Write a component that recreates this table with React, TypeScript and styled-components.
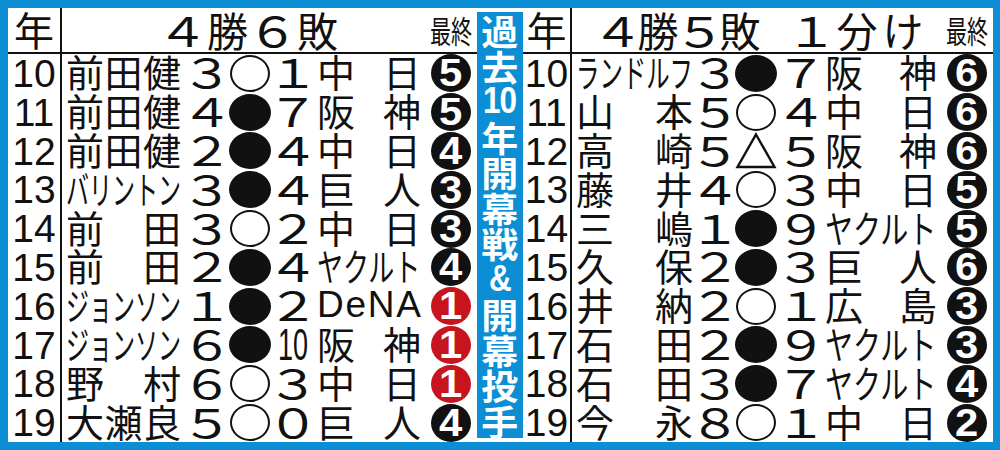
import React from 'react';
import styled, {createGlobalStyle} from 'styled-components';

const BLUE = `#0b8ed4`;
const RED = `#c8141f`;
const INK = `#111111`;
const JP = `"Noto Sans CJK JP", "Noto Sans", sans-serif`;
const LATIN = `"Liberation Sans", Arial, sans-serif`;

const GlobalStyle = createGlobalStyle`
  html, body {
    margin: 0;
    padding: 0;
    background: #ffffff;
  }

  body {
    font-family: ${JP};
    color: ${INK};
  }
`;

const Frame = styled.div`
  box-sizing: border-box;
  display: flex;
  width: 1000px;
  height: 450px;

  background: #ffffff;
  border: 8px solid ${BLUE};
  border-right-width: 7px;

  overflow: hidden;
`;

const Table = styled.div<{$cols: string}>`
  flex: none;
  display: grid;
  grid-template-columns: ${({$cols}) => $cols};
  grid-template-rows: 46px repeat(10, minmax(0, 1fr));
  height: 100%;
`;

const Cell = styled.div<{$pad?: string}>`
  box-sizing: border-box;
  display: flex;
  align-items: center;
  justify-content: center;
  min-width: 0;
  min-height: 0;
  padding: ${({$pad}) => $pad || `0`};
  line-height: 1;
`;

const HeadCell = styled(Cell)`
  border-bottom: 2px solid ${INK};
`;

const HeadYear = styled(HeadCell)`
  border-right: 2px solid ${INK};
  padding-bottom: 3px;
  font-size: 40px;
`;

const Title = styled(HeadCell)<{$gap?: number}>`
  grid-column: 2 / 7;
  gap: ${({$gap}) => $gap || 0}px;
  font-size: 41px;
`;

const TitlePart = styled.span<{$spacing: number}>`
  display: flex;
  align-items: center;
  gap: ${({$spacing}) => $spacing}px;
  white-space: nowrap;
`;

const HeadFinal = styled(HeadCell)`
  padding-bottom: 2px;
  font-size: 31px;
`;

const Narrow = styled.span<{$k: number}>`
  display: inline-block;
  white-space: nowrap;
  transform: scaleX(${({$k}) => $k});
`;

const YearCell = styled(Cell)`
  border-right: 2px solid ${INK};
  font-family: ${LATIN};
  font-size: 39px;
`;

const TextCell = styled(Cell)`
  justify-content: stretch;
  font-size: 38px;
`;

const SpreadBox = styled.div<{$latin?: boolean}>`
  display: flex;
  justify-content: space-between;
  align-items: center;
  width: 100%;

  font-family: ${({$latin}) => $latin ? LATIN : JP};
  font-size: ${({$latin}) => $latin ? 37 : 38}px;
`;

const Squeeze = styled.span`
  display: inline-block;
  white-space: nowrap;
  transform-origin: left center;
`;

// one digit: wide full-width glyph; two digits: tall condensed latin pair
const Num = styled.span<{$wide: boolean}>`
  display: inline-block;
  margin-bottom: ${({$wide}) => $wide ? 4 : 2}px;
  font-family: ${({$wide}) => $wide ? JP : LATIN};
  font-size: ${({$wide}) => $wide ? 40 : 45}px;
  transform: scaleX(${({$wide}) => $wide ? 1.3 : 0.6});
`;

const Ring = styled.div<{$filled: boolean}>`
  box-sizing: border-box;
  flex: none;
  width: ${({$filled}) => $filled ? 42 : 40}px;
  height: 37px;

  background: ${({$filled}) => $filled ? INK : `#ffffff`};
  border: ${({$filled}) => $filled ? 2.5 : 2.2}px solid ${INK};
  border-radius: 50%;
`;

const Final = styled.div<{$red: boolean}>`
  flex: none;
  display: flex;
  align-items: center;
  justify-content: center;
  width: 40px;
  height: 38px;

  color: #ffffff;
  font-family: ${LATIN};
  font-weight: 700;
  font-size: 38px;

  background: ${({$red}) => $red ? RED : INK};
  border-radius: 50%;

  span {
    display: inline-block;
    transform: scaleX(1.1);
  }
`;

const Strip = styled.div`
  box-sizing: border-box;
  flex: none;
  display: flex;
  width: 46px;
  padding: 4px 0;
`;

const StripInner = styled.div`
  flex: 1;
  display: flex;
  flex-direction: column;
  align-items: center;

  color: #ffffff;
  font-weight: 700;

  background: ${BLUE};
`;

const StripChar = styled.span<{$latin?: boolean}>`
  display: block;
  height: 35.5px;
  line-height: 35.5px;

  font-family: ${({$latin}) => $latin ? LATIN : JP};
  font-size: ${({$latin}) => $latin ? 37 : 35.5}px;
  letter-spacing: ${({$latin}) => $latin ? -1 : 0}px;
  transform: scaleX(${({$latin}) => $latin ? 0.85 : 1.04});
`;

type Mark = `win` | `loss` | `draw`;

interface Game {
  year: string,
  pitcher: string,
  w: string,
  mark: Mark,
  l: string,
  team: string,
  final: string,
  red?: boolean,
}

const left: Game[] = [
  {year: `10`, pitcher: `前田健`, w: `3`, mark: `win`, l: `1`, team: `中日`, final: `5`},
  {year: `11`, pitcher: `前田健`, w: `4`, mark: `loss`, l: `7`, team: `阪神`, final: `5`},
  {year: `12`, pitcher: `前田健`, w: `2`, mark: `loss`, l: `4`, team: `中日`, final: `4`},
  {year: `13`, pitcher: `バリントン`, w: `3`, mark: `loss`, l: `4`, team: `巨人`, final: `3`},
  {year: `14`, pitcher: `前田`, w: `3`, mark: `win`, l: `2`, team: `中日`, final: `3`},
  {year: `15`, pitcher: `前田`, w: `2`, mark: `loss`, l: `4`, team: `ヤクルト`, final: `4`},
  {year: `16`, pitcher: `ジョンソン`, w: `1`, mark: `loss`, l: `2`, team: `DeNA`, final: `1`, red: true},
  {year: `17`, pitcher: `ジョンソン`, w: `6`, mark: `loss`, l: `10`, team: `阪神`, final: `1`, red: true},
  {year: `18`, pitcher: `野村`, w: `6`, mark: `win`, l: `3`, team: `中日`, final: `1`, red: true},
  {year: `19`, pitcher: `大瀬良`, w: `5`, mark: `win`, l: `0`, team: `巨人`, final: `4`},
];

const right: Game[] = [
  {year: `10`, pitcher: `ランドルフ`, w: `3`, mark: `loss`, l: `7`, team: `阪神`, final: `6`},
  {year: `11`, pitcher: `山本`, w: `5`, mark: `win`, l: `4`, team: `中日`, final: `6`},
  {year: `12`, pitcher: `高崎`, w: `5`, mark: `draw`, l: `5`, team: `阪神`, final: `6`},
  {year: `13`, pitcher: `藤井`, w: `4`, mark: `win`, l: `3`, team: `中日`, final: `5`},
  {year: `14`, pitcher: `三嶋`, w: `1`, mark: `loss`, l: `9`, team: `ヤクルト`, final: `5`},
  {year: `15`, pitcher: `久保`, w: `2`, mark: `loss`, l: `3`, team: `巨人`, final: `6`},
  {year: `16`, pitcher: `井納`, w: `2`, mark: `win`, l: `1`, team: `広島`, final: `3`},
  {year: `17`, pitcher: `石田`, w: `2`, mark: `loss`, l: `9`, team: `ヤクルト`, final: `3`},
  {year: `18`, pitcher: `石田`, w: `3`, mark: `loss`, l: `7`, team: `ヤクルト`, final: `4`},
  {year: `19`, pitcher: `今永`, w: `8`, mark: `win`, l: `1`, team: `中日`, final: `2`},
];

const stripText = [`過`, `去`, `10`, `年`, `開`, `幕`, `戦`, `&`, `開`, `幕`, `投`, `手`];

const toWide = (s: string) => s.replace(/[0-9]/g, (d) => String.fromCharCode(0xFF10 + Number(d)));

// spreads short names over the cell, squeezes long katakana into it
const Spread = ({text, width}: {text: string, width: number}) => {
  const chars = Array.from(text);
  const isLatin = /^[A-Za-z]+$/.test(text);

  if (!isLatin && chars.length > 3) {
    return (
      <SpreadBox>
        <Squeeze style={{transform: `scaleX(${width / (chars.length * 38)})`}}>{text}</Squeeze>
      </SpreadBox>
    );
  }

  return (
    <SpreadBox $latin={isLatin}>
      {chars.map((c, i) => <span key={i}>{c}</span>)}
    </SpreadBox>
  );
};

// header words: digits drawn a bit wider, like the print face
const TitleText = ({text, spacing}: {text: string, spacing: number}) => (
  <TitlePart $spacing={spacing}>
    {Array.from(text).map((c, i) => /[0-9]/.test(c)
      ? <Narrow key={i} $k={1.25}>{toWide(c)}</Narrow>
      : <span key={i}>{c}</span>)}
  </TitlePart>
);

const MarkIcon = ({mark}: {mark: Mark}) => {
  if (mark === `draw`) {
    return (
      <svg width="42" height="37" viewBox="0 0 42 37">
        <polygon points="21,2.5 39.5,35 2.5,35" fill="none" stroke={INK} strokeWidth="2.4" />
      </svg>
    );
  }
  return <Ring $filled={mark === `loss`} />;
};

const Score = ({value}: {value: string}) => {
  const wide = value.length === 1;
  return <Num $wide={wide}>{wide ? toWide(value) : value}</Num>;
};

interface SideProps {
  cols: string,
  nameWidth: number,
  teamWidth: number,
  title: React.ReactNode,
  rows: Game[],
}

const Side = ({cols, nameWidth, teamWidth, title, rows}: SideProps) => (
  <Table $cols={cols}>
    <HeadYear>年</HeadYear>
    {title}
    <HeadFinal><Narrow $k={0.68}>最終</Narrow></HeadFinal>
    {rows.map((g) => (
      <React.Fragment key={g.year}>
        <YearCell>{g.year}</YearCell>
        <TextCell $pad="0 4px 4px"><Spread text={g.pitcher} width={nameWidth} /></TextCell>
        <Cell><Score value={g.w} /></Cell>
        <Cell><MarkIcon mark={g.mark} /></Cell>
        <Cell><Score value={g.l} /></Cell>
        <TextCell $pad="0 3px 4px"><Spread text={g.team} width={teamWidth} /></TextCell>
        <Cell><Final $red={Boolean(g.red)}><span>{g.final}</span></Final></Cell>
      </React.Fragment>
    ))}
  </Table>
);

const App = () => (
  <>
    <GlobalStyle />
    <Frame>
      <Side
        cols="54px 123px 43px 44px 42px 110px 53px"
        nameWidth={115}
        teamWidth={104}
        rows={left}
        title={
          <Title $pad="0 0 2px 14px">
            <TitleText text="4勝6敗" spacing={4} />
          </Title>
        }
      />
      <Strip>
        <StripInner>
          {stripText.map((c, i) => <StripChar key={i} $latin={/[0-9&]/.test(c)}>{c}</StripChar>)}
        </StripInner>
      </Strip>
      <Side
        cols="49px 125px 35px 48px 42px 118px 53px"
        nameWidth={117}
        teamWidth={112}
        rows={right}
        title={
          <Title $pad="0 0 2px 8px" $gap={30}>
            <TitleText text="4勝5敗" spacing={-3} />
            <TitleText text="1分け" spacing={5} />
          </Title>
        }
      />
    </Frame>
  </>
);

export default App;
